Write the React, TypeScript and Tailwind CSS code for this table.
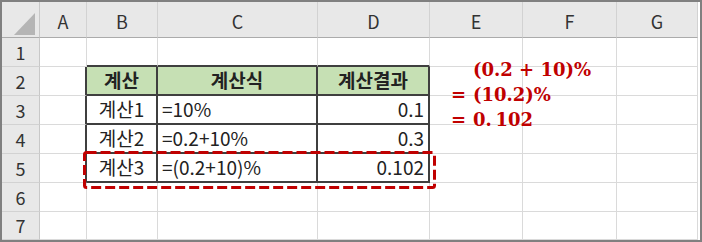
import React from "react";

type Align = "left" | "center" | "right";

interface CellData {
  text: string;
  align: Align;
  head?: boolean;
}

const columns = ["A", "B", "C", "D", "E", "F", "G"];
const rowNumbers = [1, 2, 3, 4, 5, 6, 7];

// calculation table sitting in B2:D5
const table: Record<string, CellData> = {
  B2: { text: "계산", align: "center", head: true },
  C2: { text: "계산식", align: "center", head: true },
  D2: { text: "계산결과", align: "center", head: true },
  B3: { text: "계산1", align: "center" },
  C3: { text: "=10%", align: "left" },
  D3: { text: "0.1", align: "right" },
  B4: { text: "계산2", align: "center" },
  C4: { text: "=0.2+10%", align: "left" },
  D4: { text: "0.3", align: "right" },
  B5: { text: "계산3", align: "center" },
  C5: { text: "=(0.2+10)%", align: "left" },
  D5: { text: "0.102", align: "right" },
};

const inTableCols = ["B", "C", "D"];

function cellClasses(col: string, row: number) {
  const rightDark =
    row >= 2 && row <= 5 && ["A", "B", "C", "D"].includes(col);
  const bottomDark = row >= 1 && row <= 5 && inTableCols.includes(col);
  const data = table[`${col}${row}`];

  const classes = ["flex items-center overflow-hidden"];
  classes.push(rightDark ? "border-r-2 border-r-[#3f3f3f]" : "border-r border-r-[#dadada]");
  classes.push(bottomDark ? "border-b-2 border-b-[#3f3f3f]" : "border-b border-b-[#dadada]");
  if (data?.head) classes.push("bg-[#c6e0b4] font-bold");
  else classes.push("bg-white");
  if (data?.align === "center") classes.push("justify-center");
  if (data?.align === "left") classes.push("justify-start pl-[4px]");
  if (data?.align === "right") classes.push("justify-end pr-[4px]");
  return classes.join(" ");
}

function CornerMark() {
  return (
    <div className="flex items-end justify-end bg-[#e8e8e8] border-r border-r-[#c8c8c8] border-b border-b-[#ababab] pr-[4px] pb-[2px]">
      <svg width="21" height="22" viewBox="0 0 21 22">
        <polygon points="21,0 21,22 0,22" fill="#b5b5b5" />
      </svg>
    </div>
  );
}

function Formula() {
  const rows: [string, React.ReactNode][] = [
    ["", "(0.2 + 10)%"],
    ["=", "(10.2)%"],
    ["=", <>0.&thinsp;102</>],
  ];
  return (
    <div className="absolute left-[448px] top-[55px] grid grid-cols-[16px_auto] gap-x-[7px] text-[#c00000] font-bold text-[18px] leading-[25px] [font-family:'DejaVu_Serif',serif]">
      {rows.map(([eq, body], i) => (
        <React.Fragment key={i}>
          <span className="text-right">{eq}</span>
          <span className="whitespace-pre">{body}</span>
        </React.Fragment>
      ))}
    </div>
  );
}

function Highlight() {
  return (
    <svg className="absolute left-[81px] top-[149px]" width="353" height="38" viewBox="0 0 353 38">
      <rect
        x="1.5"
        y="1.5"
        width="350"
        height="35"
        rx="2"
        fill="none"
        stroke="#c00000"
        strokeWidth="3"
        strokeDasharray="10 4"
      />
    </svg>
  );
}

export default function App() {
  return (
    <div className="w-[702px] h-[242px] bg-white border-2 border-[#808080] [font-family:'Noto_Sans_CJK_KR','Noto_Sans',sans-serif] text-[19px] text-[#222]">
      <div className="relative grid grid-cols-[38px_47px_71px_160px_112px_93px_94px_81px] grid-rows-[36px_29px_29px_29px_29px_29px_29px_28px]">
        <CornerMark />
        {columns.map((c) => (
          <div
            key={c}
            className="flex items-center justify-center pt-[3px] bg-[#e8e8e8] border-r border-r-[#d2d2d2] border-b border-b-[#ababab] text-[18px] text-[#333]"
          >
            {c}
          </div>
        ))}
        {rowNumbers.map((r) => (
          <React.Fragment key={r}>
            <div className="flex items-center justify-center bg-[#e8e8e8] border-r border-r-[#c8c8c8] border-b border-b-[#d2d2d2] text-[18px] text-[#333]">
              {r}
            </div>
            {columns.map((c) => (
              <div key={c} className={cellClasses(c, r)}>
                {table[`${c}${r}`]?.text ?? ""}
              </div>
            ))}
          </React.Fragment>
        ))}
        <Formula />
        <Highlight />
      </div>
    </div>
  );
}
